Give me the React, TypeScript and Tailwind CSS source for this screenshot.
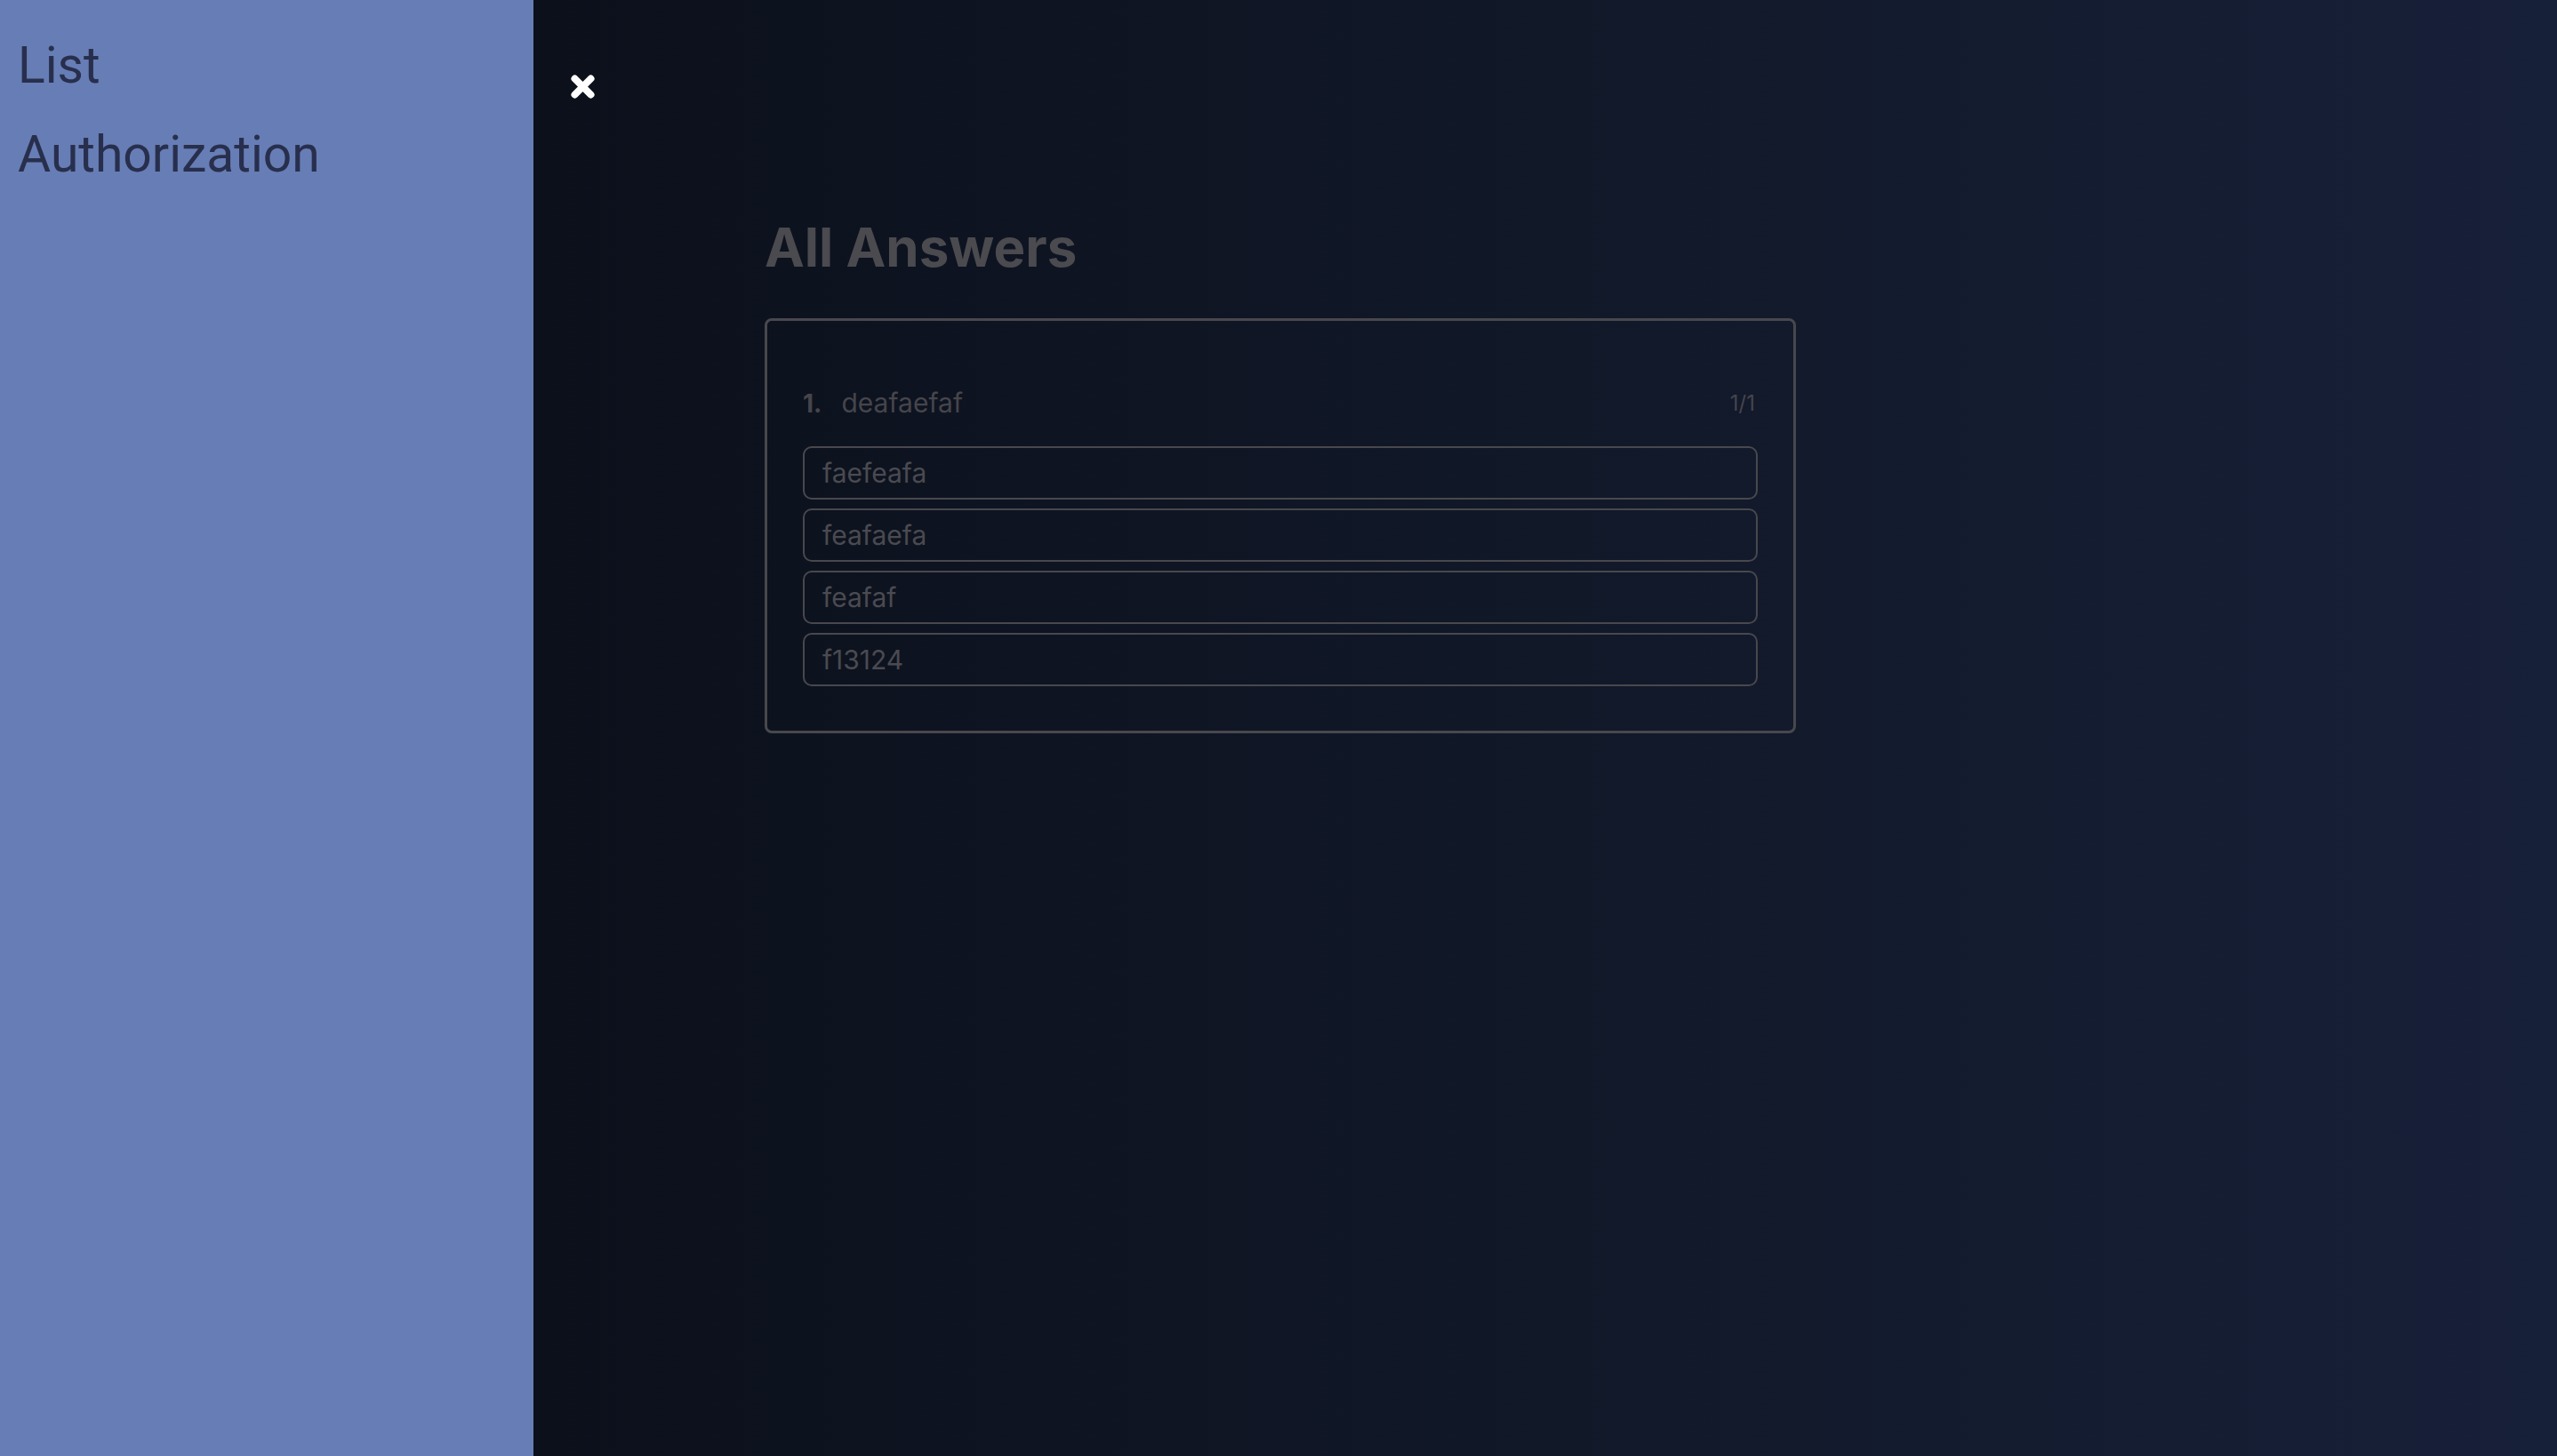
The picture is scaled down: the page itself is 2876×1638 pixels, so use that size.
import React from 'react'

const answers = ['faefeafa', 'feafaefa', 'feafaf', 'f13124']

function CloseIcon() {
  return (
    <svg width="27" height="27" viewBox="0 0 27 27" fill="none">
      <path d="M4.5 4.5L22.5 22.5M22.5 4.5L4.5 22.5" stroke="#ffffff" strokeWidth="8" strokeLinecap="round" />
    </svg>
  )
}

export default function App() {
  return (
    <div className="flex min-h-screen w-full">
      <aside className="w-[600px] shrink-0 bg-[#677db5] pl-5 pt-[24px] font-['Roboto',sans-serif] text-[57px] leading-[100px] text-[#282f4d]">
        <div>List</div>
        <div>Authorization</div>
      </aside>

      <main className="flex-1 bg-gradient-to-r from-[#0b101b] via-[#111828] to-[#172039] font-['Inter',sans-serif]">
        <button className="ml-[42px] mt-[84px] block">
          <CloseIcon />
        </button>

        <section className="ml-[260px] mt-[137px] w-[1160px]">
          <h1 className="text-[60px] font-bold leading-[60px] text-[#4a4a4f]">All Answers</h1>

          <div className="mt-[50px] rounded-lg border-[3px] border-[#48484d] px-10 pb-[50px] pt-[74px]">
            <div className="flex items-center justify-between">
              <div className="flex items-baseline gap-[22px] leading-[36px] text-[#45454b]">
                <span className="text-[28px] font-bold">1.</span>
                <span className="text-[30px]">deafaefaf</span>
              </div>
              <span className="pr-[3px] text-[24px] leading-[36px] text-[#45454b]">1/1</span>
            </div>

            <div className="mt-[30px] flex flex-col gap-[10px]">
              {answers.map((a) => (
                <div
                  key={a}
                  className="flex h-[60px] items-center rounded-[10px] border-2 border-[#48484d] px-5 text-[30px] text-[#4a4a50]"
                >
                  {a}
                </div>
              ))}
            </div>
          </div>
        </section>
      </main>
    </div>
  )
}
